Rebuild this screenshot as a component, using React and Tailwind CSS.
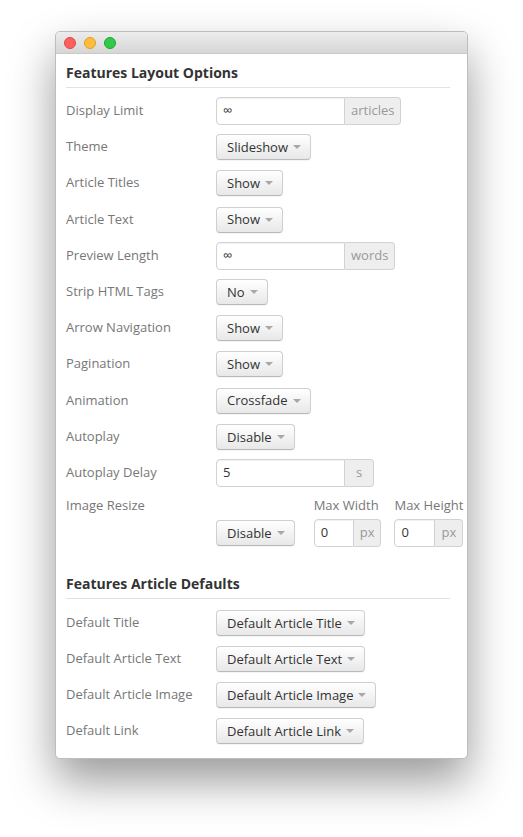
import React from "react";

const font = { fontFamily: '"Open Sans", "Noto Sans", sans-serif' };

function Caret() {
  return (
    <span className="ml-[5px] inline-block h-0 w-0 border-l-[4px] border-r-[4px] border-t-[4px] border-l-transparent border-r-transparent border-t-[#a8a8a8] align-middle" />
  );
}

function Btn({ children }) {
  return (
    <button className="flex h-[26px] items-center rounded-[4px] border border-[#cfcfcf] border-b-[#b9b9b9] bg-gradient-to-b from-white to-[#e8e8e8] pl-[10px] pr-[9px] text-[13px] leading-none text-[#333] shadow-[inset_0_1px_0_rgba(255,255,255,0.3),0_1px_1px_rgba(0,0,0,0.05)]">
      <span>{children}</span>
      <Caret />
    </button>
  );
}

function InputAddon({ value, addon, w = "w-[129px]" }) {
  return (
    <div className="flex h-[28px]">
      <div className={`${w} flex items-center rounded-l-[4px] border border-[#d2d2d2] bg-white pl-[6px] text-[13px] text-[#333] shadow-[inset_0_1px_1px_rgba(0,0,0,0.06)]`}>
        {value}
      </div>
      <div className="flex items-center rounded-r-[4px] border border-l-0 border-[#d2d2d2] bg-[#eeeeee] px-[6px] text-[13px] text-[#999]">
        {addon}
      </div>
    </div>
  );
}

function Row({ label, children, h = "h-[36px]" }) {
  return (
    <div className={`flex ${h} items-center`}>
      <div className="w-[150px] text-[13px] text-[#777]">{label}</div>
      <div>{children}</div>
    </div>
  );
}

function Heading({ children }) {
  return (
    <div className="mr-[17px] border-b border-[#e3e3e3] pb-[4px] text-[14px] font-bold leading-[20px] text-[#333]">
      {children}
    </div>
  );
}

export default function App() {
  return (
    <div className="min-h-[837px] bg-white pl-[55px] pt-[31px]" style={font}>
      <div className="w-[413px] rounded-[5px] border border-[#bdbdbd] bg-white shadow-[0_22px_45px_rgba(0,0,0,0.4)]">
        <div className="flex h-[22px] items-center gap-[8px] rounded-t-[5px] border-b border-[#c9c9c9] bg-gradient-to-b from-[#ececec] to-[#d6d6d6] pl-[8px]">
          <span className="h-[12px] w-[12px] rounded-full border border-[#e2463f] bg-[#fc605c]" />
          <span className="h-[12px] w-[12px] rounded-full border border-[#e1a116] bg-[#fdbc40]" />
          <span className="h-[12px] w-[12px] rounded-full border border-[#12ac28] bg-[#34c84a]" />
        </div>
        <div className="pb-[9px] pl-[10px] pt-[9px]">
          <Heading>Features Layout Options</Heading>
          <div className="mt-[5px]">
            <Row label="Display Limit">
              <InputAddon value="∞" addon="articles" />
            </Row>
            <Row label="Theme">
              <Btn>Slideshow</Btn>
            </Row>
            <Row label="Article Titles">
              <Btn>Show</Btn>
            </Row>
            <Row label="Article Text" h="h-[37px]">
              <Btn>Show</Btn>
            </Row>
            <Row label="Preview Length">
              <InputAddon value="∞" addon="words" />
            </Row>
            <Row label="Strip HTML Tags">
              <Btn>No</Btn>
            </Row>
            <Row label="Arrow Navigation">
              <Btn>Show</Btn>
            </Row>
            <Row label="Pagination">
              <Btn>Show</Btn>
            </Row>
            <Row label="Animation" h="h-[37px]">
              <Btn>Crossfade</Btn>
            </Row>
            <Row label="Autoplay">
              <Btn>Disable</Btn>
            </Row>
            <Row label="Autoplay Delay">
              <InputAddon value="5" addon={<span className="px-[5px]">s</span>} />
            </Row>
            <div className="flex pt-[4px]">
              <div className="w-[150px] text-[13px] leading-[20px] text-[#777]">Image Resize</div>
              <div className="flex items-end">
                <div className="mb-[1px]">
                  <Btn>Disable</Btn>
                </div>
                <div className="ml-[19px] flex flex-col">
                  <div className="mb-[4px] text-[13px] leading-[20px] text-[#777]">Max Width</div>
                  <InputAddon value="0" addon="px" w="w-[40px]" />
                </div>
                <div className="ml-[13px] flex flex-col">
                  <div className="mb-[4px] text-[13px] leading-[20px] text-[#777]">Max Height</div>
                  <InputAddon value="0" addon="px" w="w-[41px]" />
                </div>
              </div>
            </div>
          </div>
          <div className="mt-[27px]">
            <Heading>Features Article Defaults</Heading>
          </div>
          <div className="mt-[6px]">
            <Row label="Default Title">
              <Btn>Default Article Title</Btn>
            </Row>
            <Row label="Default Article Text">
              <Btn>Default Article Text</Btn>
            </Row>
            <Row label="Default Article Image">
              <Btn>Default Article Image</Btn>
            </Row>
            <Row label="Default Link">
              <Btn>Default Article Link</Btn>
            </Row>
          </div>
        </div>
      </div>
    </div>
  );
}
